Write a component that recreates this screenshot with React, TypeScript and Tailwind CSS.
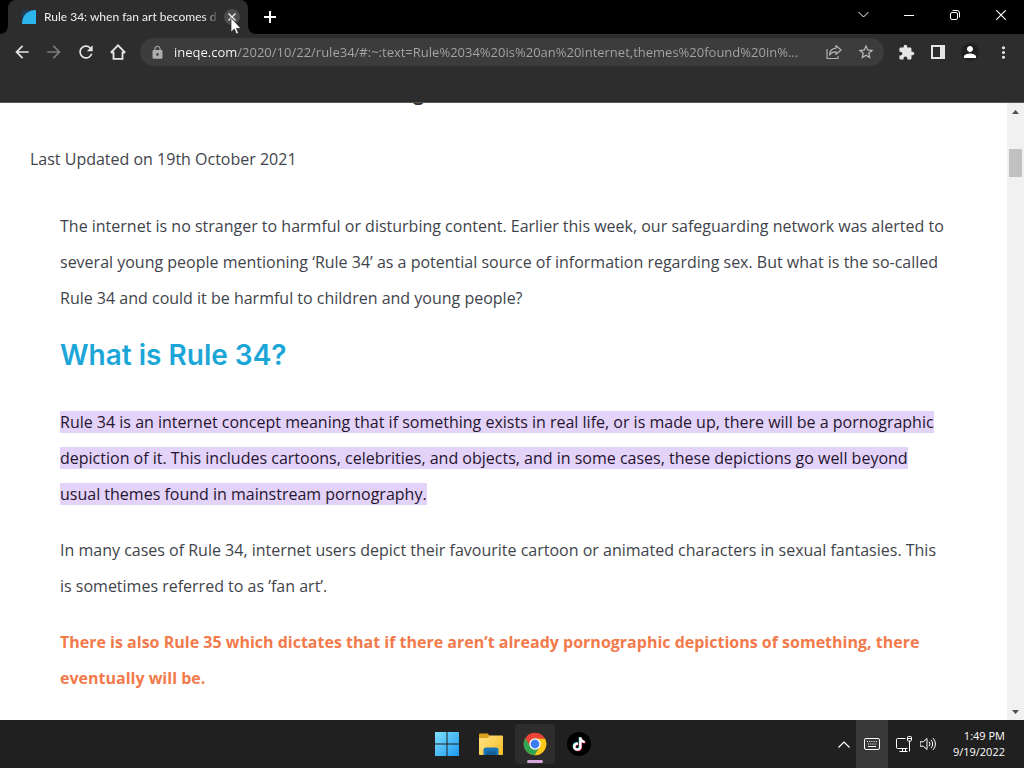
import type { ReactNode } from "react";
import {
  MdArrowBack,
  MdArrowForward,
  MdExtension,
  MdLock,
  MdMoreVert,
  MdPerson,
  MdRefresh,
  MdStarBorder,
} from "react-icons/md";

const ADDRESS =
  "ineqe.com/2020/10/22/rule34/#:~:text=Rule%2034%20is%20an%20internet,themes%20found%20in%...";

function IconButton({
  label,
  className = "",
  children,
}: {
  label: string;
  className?: string;
  children: ReactNode;
}) {
  return (
    <button
      type="button"
      aria-label={label}
      className={`flex shrink-0 items-center justify-center ${className}`}
    >
      {children}
    </button>
  );
}

function TabStrip() {
  return (
    <div className="flex h-[34px] shrink-0 items-stretch bg-black">
      <svg className="size-2 shrink-0 self-end" viewBox="0 0 8 8" aria-hidden="true">
        <path d="M8 0a8 8 0 0 1-8 8h8z" fill="#2d2d2d" />
      </svg>
      <div className="flex w-60 items-center rounded-t-lg bg-[#2d2d2d] pr-2 pl-3">
        <svg className="mr-2 ml-[2px] size-[14px] shrink-0" viewBox="0 0 14 14" aria-hidden="true">
          <path d="M0 0h14v14H0z" fill="#1c3d55" />
          <path d="M0 14C0 5.500 5.500 0 14 0v14z" fill="#2cb5ed" />
        </svg>
        <span className="min-w-0 flex-1 overflow-hidden font-['Lato',sans-serif] text-[12px] leading-4 whitespace-nowrap text-[#f1f1f1] [mask-image:linear-gradient(90deg,#000_160px,transparent_176px)]">
          Rule 34: when fan art becomes d
        </span>
        <div className="relative ml-1">
          <IconButton label="Close tab" className="size-4 rounded-full bg-[#4b4c4e]">
            <svg className="size-4" viewBox="0 0 16 16" stroke="#e8e8e8" strokeWidth="1.500">
              <path d="M4.500 4.500l7 7M11.500 4.500l-7 7" />
            </svg>
          </IconButton>
          <svg
            className="pointer-events-none absolute top-2 left-[6px] h-[18px] w-3"
            viewBox="0 0 12 18"
            aria-hidden="true"
          >
            <path
              d="M1 .8v14.400l3.300-3.100 2.100 4.900 2.100-.9-2.100-4.700h4.500z"
              fill="#fff"
              stroke="#222"
              strokeWidth=".7"
            />
          </svg>
        </div>
      </div>
      <svg className="size-2 shrink-0 self-end" viewBox="0 0 8 8" aria-hidden="true">
        <path d="M0 0a8 8 0 0 0 8 8H0z" fill="#2d2d2d" />
      </svg>
      <IconButton label="New tab" className="w-7">
        <svg className="size-3" viewBox="0 0 12 12" stroke="#fff" strokeWidth="2">
          <path d="M6 0v12M0 6h12" />
        </svg>
      </IconButton>
      <div className="ml-auto flex h-[29px] text-white">
        <IconButton label="Search tabs" className="w-[46px]">
          <svg className="size-[11px]" viewBox="0 0 11 11" fill="none" stroke="currentColor">
            <path d="M.5 3l5 5 5-5" />
          </svg>
        </IconButton>
        <IconButton label="Minimize" className="w-[46px]">
          <svg className="size-[10px]" viewBox="0 0 10 10" stroke="currentColor">
            <path d="M0 5.500h10" />
          </svg>
        </IconButton>
        <IconButton label="Restore" className="w-[46px]">
          <svg className="size-[10px]" viewBox="0 0 10 10" fill="none" stroke="currentColor">
            <rect x=".5" y="2.500" width="7" height="7" rx="1.500" />
            <path d="M2.500.5h4.500a2.500 2.500 0 0 1 2.500 2.500v4.500" />
          </svg>
        </IconButton>
        <IconButton label="Close" className="w-[46px]">
          <svg className="size-[10px]" viewBox="0 0 10 10" stroke="currentColor" strokeWidth="1.200">
            <path d="M.3.3l9.400 9.400M9.700.3l-9.400 9.400" />
          </svg>
        </IconButton>
      </div>
    </div>
  );
}

function Toolbar() {
  return (
    <div className="flex h-9 shrink-0 items-center bg-[#2d2d2d] pr-1 pl-[6px] text-[#e6e6e6]">
      <IconButton label="Back" className="size-8">
        <MdArrowBack size={20} />
      </IconButton>
      <IconButton label="Forward" className="size-8 text-[#7c7c7c]">
        <MdArrowForward size={20} />
      </IconButton>
      <IconButton label="Reload" className="size-8">
        <MdRefresh size={20} />
      </IconButton>
      <IconButton label="Home" className="size-8">
        <svg className="size-4" viewBox="0 0 16 16" fill="none" stroke="currentColor" strokeWidth="1.800">
          <path d="M3.500 7.500v7.300h9V7.500M.8 8.700L8 1.400l7.200 7.300M1 8.500h2.500m9 0H15" />
        </svg>
      </IconButton>
      <div className="ml-[6px] flex h-7 min-w-0 flex-1 items-center rounded-full bg-[#3c3c3c] px-[10px]">
        <MdLock size={15} className="mr-[9px] shrink-0 text-[#adadad]" />
        <input
          type="text"
          aria-label="Address"
          defaultValue={ADDRESS}
          className="min-w-0 flex-1 bg-[linear-gradient(90deg,#ffffff_63px,#a6a6a6_63px)] bg-clip-text text-[13px] leading-5 text-transparent outline-none"
        />
        <IconButton label="Share" className="ml-1 w-4">
          <svg
            className="size-4"
            viewBox="0 0 16 16"
            fill="none"
            stroke="#b4b4b4"
            strokeWidth="1.200"
            strokeLinejoin="round"
          >
            <path d="M1 5v9.500h11v-2.500" />
            <path d="M10 1.500L15 6l-5 4.300V7.800c-3.200 0-5.200.9-6.500 3.200.3-3.900 2.500-6.600 6.500-6.900z" />
          </svg>
        </IconButton>
        <IconButton label="Bookmark this page" className="ml-4 w-4">
          <MdStarBorder size={18} className="shrink-0 text-[#bdbdbd]" />
        </IconButton>
      </div>
      <div className="ml-[6px] flex">
        <IconButton label="Extensions" className="size-8">
          <MdExtension size={17} />
        </IconButton>
        <IconButton label="Side panel" className="size-8">
          <svg className="size-[14px]" viewBox="0 0 14 14" fill="currentColor">
            <path d="M0 0h14v14H0zM2 2v10h7V2z" fillRule="evenodd" />
          </svg>
        </IconButton>
        <IconButton label="Profile" className="size-8">
          <span className="flex size-[18px] items-center justify-center rounded-full bg-[#202020] text-white">
            <MdPerson size={18} />
          </span>
        </IconButton>
        <IconButton label="Menu" className="h-8 w-[34px]">
          <MdMoreVert size={19} />
        </IconButton>
      </div>
    </div>
  );
}

function Article() {
  return (
    <main className="min-w-0 flex-1 overflow-hidden bg-white">
      <div className="flex h-1 items-end overflow-hidden pl-[411px] font-['Inter',sans-serif] text-[24px] leading-[30px] text-[#333]">
        <span>g</span>
      </div>
      <article className="px-[30px] pt-[34px] text-[16px] leading-9 text-[#3f444b]">
        <p>Last Updated on 19th October 2021</p>
        <div className="flex flex-col gap-5 px-[30px] pt-[31px]">
          <p>
            The internet is no stranger to harmful or disturbing content. Earlier this week, our
            safeguarding network was alerted to several young people mentioning ‘Rule 34’ as a
            potential source of information regarding sex. But what is the so-called Rule 34 and
            could it be harmful to children and young people?
          </p>
          <h2 className="mt-[2px] mb-3 font-['Inter',sans-serif] text-[28px] leading-[34px] font-semibold text-[#1ca6d8]">
            What is Rule 34?
          </h2>
          <p>
            <mark className="bg-[#e4d3f8] text-[#25152f]">
              Rule 34 is an internet concept meaning that if something exists in real life, or is
              made up, there will be a pornographic depiction of it. This includes cartoons,
              celebrities, and objects, and in some cases, these depictions go well beyond usual
              themes found in mainstream pornography.
            </mark>
          </p>
          <p>
            In many cases of Rule 34, internet users depict their favourite cartoon or animated
            characters in sexual fantasies. This is sometimes referred to as ’fan art’.
          </p>
          <p className="font-bold text-[#f27a4b]">
            There is also Rule 35 which dictates that if there aren’t already pornographic
            depictions of something, there eventually will be.
          </p>
        </div>
      </article>
    </main>
  );
}

function Scrollbar() {
  return (
    <div className="flex w-[17px] shrink-0 flex-col bg-[#f1f1f1]">
      <IconButton label="Scroll up" className="h-[17px]">
        <svg className="h-1 w-[7px]" viewBox="0 0 7 4" fill="#505050">
          <path d="M0 4l3.500-4L7 4z" />
        </svg>
      </IconButton>
      <div className="flex-1 px-[2px] pt-[29px]">
        <div className="h-7 bg-[#c1c1c1]" />
      </div>
      <IconButton label="Scroll down" className="h-[17px]">
        <svg className="h-1 w-[7px]" viewBox="0 0 7 4" fill="#505050">
          <path d="M0 0h7L3.500 4z" />
        </svg>
      </IconButton>
    </div>
  );
}

function WindowsIcon() {
  return (
    <svg className="size-6" viewBox="0 0 24 24">
      <defs>
        <linearGradient id="win" x1="0" y1="0" x2="24" y2="24" gradientUnits="userSpaceOnUse">
          <stop stopColor="#7fe0fb" />
          <stop offset="1" stopColor="#1b98f0" />
        </linearGradient>
      </defs>
      <path d="M0 0h11.500v11.500H0zM12.500 0H24v11.500H12.500zM0 12.500h11.500V24H0zM12.500 12.500H24V24H12.500z" fill="url(#win)" />
    </svg>
  );
}

function ExplorerIcon() {
  return (
    <svg className="size-6" viewBox="0 0 24 24">
      <defs>
        <linearGradient id="folder" x1="0" y1="3" x2="24" y2="23" gradientUnits="userSpaceOnUse">
          <stop stopColor="#ffe487" />
          <stop offset="1" stopColor="#f7bd25" />
        </linearGradient>
      </defs>
      <path d="M0 2.500A1 1 0 0 1 1 1.500h7.500l2.500 2.200-2 3H0z" fill="#d9a11c" />
      <path d="M0 6h8.500l2.500-2.500h12a1 1 0 0 1 1 1V22a1 1 0 0 1-1 1H1a1 1 0 0 1-1-1z" fill="url(#folder)" />
      <path d="M4.500 23v-5a2.500 2.500 0 0 1 2.500-2.500h10a2.500 2.500 0 0 1 2.500 2.500v5z" fill="#1b72b5" />
      <path d="M7.500 19.500h9v3.500h-9z" fill="#155f9a" />
    </svg>
  );
}

function ChromeIcon() {
  return (
    <svg className="size-6" viewBox="0 0 24 24">
      <circle cx="12" cy="12" r="11.300" fill="#e94435" />
      <path d="M12 6.800h10.050A11.300 11.300 0 0 1 11.500 23.300L16.500 14.600z" fill="#fbc917" />
      <path d="M2.200 6.350L7.500 14.600A5.200 5.200 0 0 0 16.500 14.600L11.500 23.300A11.300 11.300 0 0 1 2.200 6.350z" fill="#31a651" />
      <circle cx="12" cy="12" r="5.700" fill="#fff" />
      <circle cx="12" cy="12" r="4.400" fill="#3b7ded" />
    </svg>
  );
}

function TikTokIcon() {
  const note =
    "M12.200 5.500h2.300c.3 1.900 1.400 3 3.200 3.200v2.300c-1.200 0-2.300-.3-3.200-1v4.700a4.200 4.200 0 1 1-3.600-4.200v2.400a1.900 1.900 0 1 0 1.300 1.800z";
  return (
    <svg className="size-6" viewBox="0 0 24 24">
      <circle cx="12" cy="12" r="12" fill="#000" />
      <path d={note} fill="#28e5e0" transform="translate(-.5 -.5)" />
      <path d={note} fill="#fb2c55" transform="translate(.6 .5)" />
      <path d={note} fill="#fff" />
    </svg>
  );
}

function Taskbar() {
  return (
    <footer className="grid h-12 shrink-0 grid-cols-[1fr_auto_1fr] items-center bg-[#202020] pl-[2px] text-white">
      <div />
      <div className="flex gap-1">
        <IconButton label="Start" className="size-10">
          <WindowsIcon />
        </IconButton>
        <IconButton label="File Explorer" className="size-10">
          <ExplorerIcon />
        </IconButton>
        <IconButton label="Google Chrome" className="relative size-10 rounded bg-[#2d2d2d]">
          <ChromeIcon />
          <span className="absolute bottom-[1px] left-3 h-[3px] w-4 rounded-full bg-[#d6a6dc]" />
        </IconButton>
        <IconButton label="TikTok" className="size-10">
          <TikTokIcon />
        </IconButton>
      </div>
      <div className="flex h-full items-center justify-end pr-[19px]">
        <IconButton label="Show hidden icons" className="h-full w-6">
          <svg className="h-[7px] w-3" viewBox="0 0 12 7" fill="none" stroke="#fff" strokeWidth="1.200">
            <path d="M.5 6.500L6 1l5.500 5.500" />
          </svg>
        </IconButton>
        <IconButton label="Touch keyboard" className="h-full w-8 bg-[#383838]">
          <svg className="h-3 w-4" viewBox="0 0 16 12" fill="none" stroke="#fff">
            <rect x=".5" y=".5" width="15" height="11" rx="1.500" />
            <path d="M3 3.500h10M4 6h9" strokeDasharray="1 1.200" />
            <path d="M4 8.500h8" />
          </svg>
        </IconButton>
        <IconButton label="Network" className="ml-2 w-4">
          <svg className="size-4" viewBox="0 0 16 16" fill="none" stroke="#fff">
            <path d="M9.500 2.500h-8a1 1 0 0 0-1 1v8a1 1 0 0 0 1 1h10M3.500 15.500h8M6.500 12.500v3M9.500 12.500v3M13.500 5v10.500" />
            <rect x="11.500" y=".5" width="4" height="4.500" rx=".8" />
            <path d="M12 2.500h3" />
          </svg>
        </IconButton>
        <IconButton label="Volume" className="ml-2 w-4">
          <svg className="size-4" viewBox="0 0 16 16" fill="none" stroke="#fff" strokeLinecap="round" strokeLinejoin="round">
            <path d="M.5 5.800h2.700L7 2.500v11L3.200 10.200H.5z" />
            <path d="M9.300 6a3 3 0 0 1 0 4M11.300 4.200a5.500 5.500 0 0 1 0 7.600M13.300 2.400a8 8 0 0 1 0 11.200" />
          </svg>
        </IconButton>
        <div className="ml-[15px] min-w-[54px] text-right text-[11px] leading-4">
          <div>1:49 PM</div>
          <div>9/19/2022</div>
        </div>
      </div>
    </footer>
  );
}

export default function App() {
  return (
    <div className="flex h-screen flex-col overflow-hidden bg-[#2d2d2d] font-['Open_Sans','Noto_Sans',sans-serif]">
      <TabStrip />
      <Toolbar />
      <div className="h-[33px] shrink-0 border-b border-[#555] bg-[#2d2d2d]" />
      <div className="flex min-h-0 flex-1">
        <Article />
        <Scrollbar />
      </div>
      <Taskbar />
    </div>
  );
}
